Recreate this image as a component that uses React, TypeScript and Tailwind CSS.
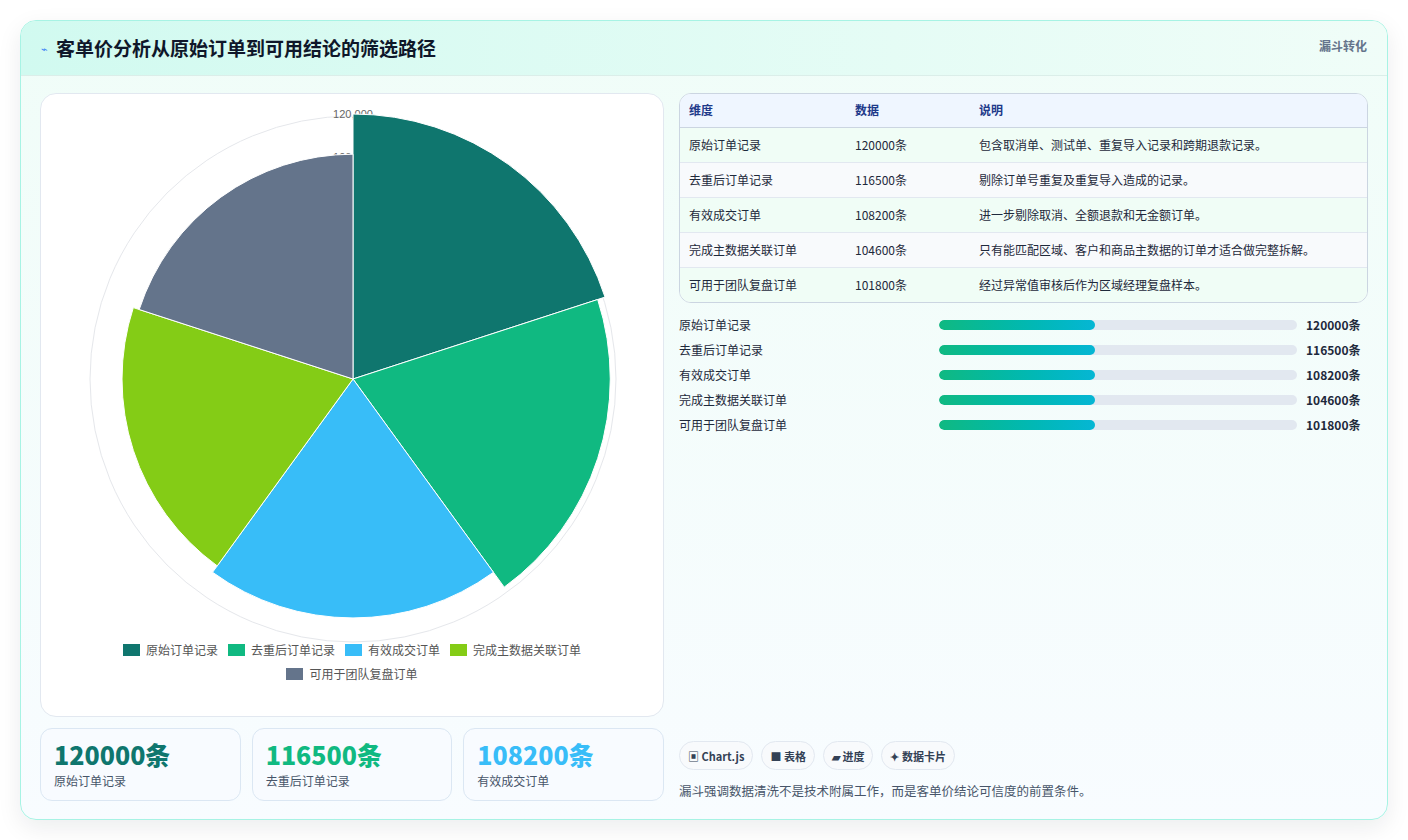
import React from "react";

const rows = [
  { name: "原始订单记录", value: 120000, note: "包含取消单、测试单、重复导入记录和跨期退款记录。", color: "#0f766e" },
  { name: "去重后订单记录", value: 116500, note: "剔除订单号重复及重复导入造成的记录。", color: "#10b981" },
  { name: "有效成交订单", value: 108200, note: "进一步剔除取消、全额退款和无金额订单。", color: "#38bdf8" },
  { name: "完成主数据关联订单", value: 104600, note: "只有能匹配区域、客户和商品主数据的订单才适合做完整拆解。", color: "#84cc16" },
  { name: "可用于团队复盘订单", value: 101800, note: "经过异常值审核后作为区域经理复盘样本。", color: "#64748b" },
];

const font = { fontFamily: '"Noto Sans CJK SC", "Noto Sans", sans-serif' };

function PolarChart() {
  const cx = 312;
  const cy = 285;
  const maxR = 265;
  const slices = rows.map((r, i) => {
    const rad = (r.value / 120000) * maxR;
    const a0 = ((i * 72 - 90) * Math.PI) / 180;
    const a1 = (((i + 1) * 72 - 90) * Math.PI) / 180;
    const x0 = cx + rad * Math.cos(a0);
    const y0 = cy + rad * Math.sin(a0);
    const x1 = cx + rad * Math.cos(a1);
    const y1 = cy + rad * Math.sin(a1);
    return <path key={r.name} d={`M${cx},${cy} L${x0},${y0} A${rad},${rad} 0 0 1 ${x1},${y1} Z`} fill={r.color} stroke="#fff" strokeWidth={1} />;
  });
  return (
    <svg width={623} height={555} className="block">
      <circle cx={cx} cy={cy} r={263} fill="none" stroke="#e5e7eb" strokeWidth={1} />
      <text x={cx} y={cy - 261} textAnchor="middle" fontSize={11} fill="#666" fontFamily="Liberation Sans, sans-serif">120,000</text>
      <text x={cx} y={cy - 218} textAnchor="middle" fontSize={11} fill="#666" fontFamily="Liberation Sans, sans-serif">100,000</text>
      {slices}
    </svg>
  );
}

export default function App() {
  return (
    <div className="w-[1408px] h-[840px] bg-white p-5" style={font}>
      <div className="h-[800px] rounded-2xl border border-[#a7f3e4] bg-gradient-to-b from-[#f0fdf8] to-[#f8fcff] shadow-[0_8px_24px_rgba(15,23,42,0.08)] overflow-hidden flex flex-col">
        <div className="h-[55px] shrink-0 flex items-start justify-between px-5 pt-[13px] bg-gradient-to-r from-[#d1faf0] to-[#f0fdf8] border-b border-[#dbeee9]">
          <div className="flex items-center gap-2">
            <span className="text-[11px] text-[#3b82f6]">⌁</span>
            <h1 className="text-[19px] font-bold text-[#0f172a] leading-[28px]">客单价分析从原始订单到可用结论的筛选路径</h1>
          </div>
          <span className="text-[12px] font-semibold text-[#64748b] mt-[3px]">漏斗转化</span>
        </div>
        <div className="flex gap-[15px] px-[19px] pt-[17px]">
          <div className="w-[624px] flex flex-col gap-[11px]">
            <div className="h-[624px] rounded-2xl border border-[#e2e8f0] bg-white flex flex-col items-center overflow-hidden">
              <div className="pt-[0px] -mb-[8px]"><PolarChart /></div>
              <div className="flex flex-wrap justify-center gap-x-[10px] gap-y-[6px] px-[70px] text-[12px] text-[#555]">
                {rows.map((r) => (
                  <span key={r.name} className="flex items-center gap-[6px]">
                    <span className="w-[17px] h-[12px] inline-block" style={{ background: r.color }} />
                    {r.name}
                  </span>
                ))}
              </div>
            </div>
            <div className="grid grid-cols-3 gap-[11px]">
              {rows.slice(0, 3).map((r) => (
                <div key={r.name} className="h-[73px] rounded-xl border border-[#dbe7f3] bg-[#f8fbff] px-[13px] pt-[9px]">
                  <div className="text-[25px] font-extrabold leading-[32px]" style={{ color: r.color === "#0f766e" ? "#0f766e" : r.color }}>{r.value}条</div>
                  <div className="text-[12px] text-[#475569] mt-[2px]">{r.name}</div>
                </div>
              ))}
            </div>
          </div>
          <div className="flex-1 flex flex-col">
            <div className="rounded-xl border border-[#cbd5e1] overflow-hidden bg-white">
              <table className="w-full text-[12px] text-[#1e293b]">
                <thead>
                  <tr className="bg-[#eff6ff] text-[#1e3a8a] font-semibold h-[33px] border-b border-[#cbd5e1]">
                    <th className="text-left pl-[9px] w-[175px] font-semibold">维度</th>
                    <th className="text-left w-[124px] font-semibold">数据</th>
                    <th className="text-left font-semibold">说明</th>
                  </tr>
                </thead>
                <tbody>
                  {rows.map((r, i) => (
                    <tr key={r.name} className={`h-[35px] ${i < 4 ? "border-b border-[#e2e8f0]" : ""} ${i % 2 ? "bg-[#f8fafc]" : "bg-[#f0fdf6]"}`}>
                      <td className="pl-[9px]">{r.name}</td>
                      <td>{r.value}条</td>
                      <td>{r.note}</td>
                    </tr>
                  ))}
                </tbody>
              </table>
            </div>
            <div className="mt-[12px] flex flex-col gap-[6px]">
              {rows.map((r) => (
                <div key={r.name} className="flex items-center h-[19px] text-[12px]">
                  <span className="w-[260px] text-[#1e293b]">{r.name}</span>
                  <div className="w-[358px] h-[10px] rounded-full bg-[#e2e8f0] overflow-hidden">
                    <div className="h-full w-[156px] rounded-full bg-gradient-to-r from-[#10b981] to-[#06b6d4]" />
                  </div>
                  <span className="ml-[9px] font-bold text-[#1e293b]">{r.value}条</span>
                </div>
              ))}
            </div>
            <div className="flex-1" />
            <div className="mt-[305px] flex gap-[8px] text-[11px] font-semibold text-[#334155]">
              {["▣ Chart.js", "■ 表格", "▰ 进度", "✦ 数据卡片"].map((c) => (
                <span key={c} className="h-[29px] px-[8px] rounded-full border border-[#e2e8f0] bg-[#f8fafc] flex items-center">{c}</span>
              ))}
            </div>
            <p className="mt-[12px] text-[12.5px] text-[#475569]">漏斗强调数据清洗不是技术附属工作，而是客单价结论可信度的前置条件。</p>
          </div>
        </div>
      </div>
    </div>
  );
}
